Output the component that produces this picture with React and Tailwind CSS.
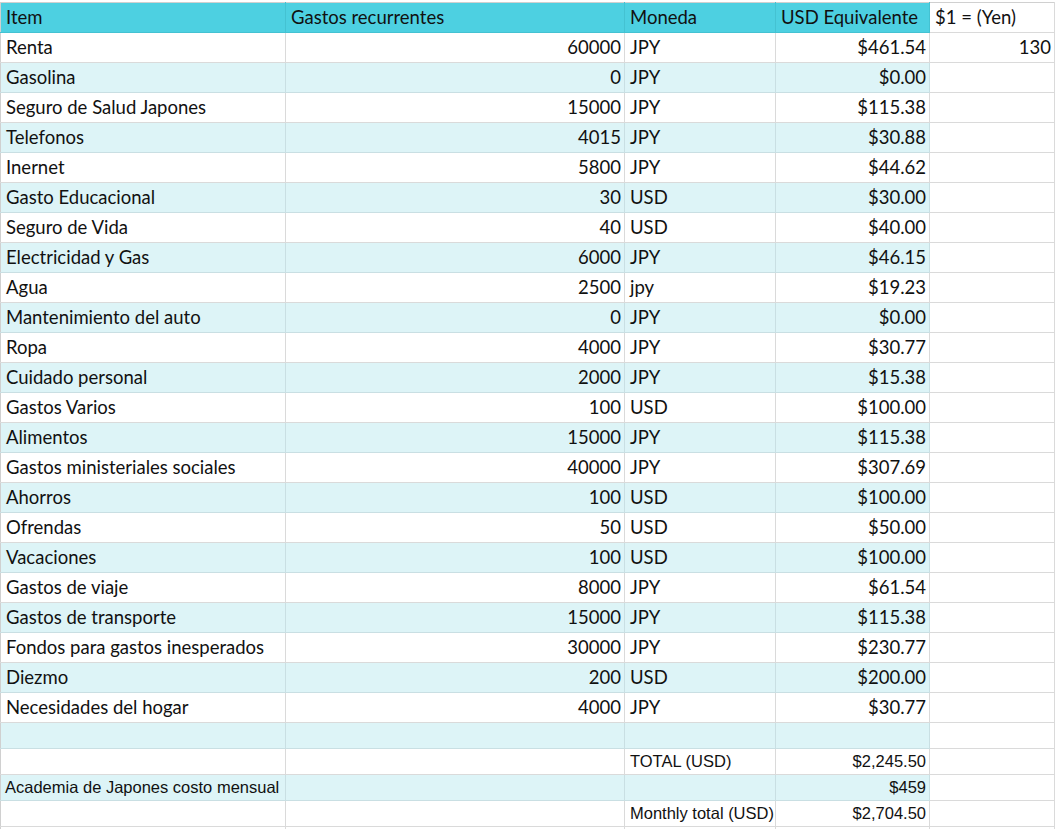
import React from 'react';

const rows = [
    ['Renta', '60000', 'JPY', '$461.54', '130'],
    ['Gasolina', '0', 'JPY', '$0.00'],
    ['Seguro de Salud Japones', '15000', 'JPY', '$115.38'],
    ['Telefonos', '4015', 'JPY', '$30.88'],
    ['Inernet', '5800', 'JPY', '$44.62'],
    ['Gasto Educacional', '30', 'USD', '$30.00'],
    ['Seguro de Vida', '40', 'USD', '$40.00'],
    ['Electricidad y Gas', '6000', 'JPY', '$46.15'],
    ['Agua', '2500', 'jpy', '$19.23'],
    ['Mantenimiento del auto', '0', 'JPY', '$0.00'],
    ['Ropa', '4000', 'JPY', '$30.77'],
    ['Cuidado personal', '2000', 'JPY', '$15.38'],
    ['Gastos Varios', '100', 'USD', '$100.00'],
    ['Alimentos', '15000', 'JPY', '$115.38'],
    ['Gastos ministeriales sociales', '40000', 'JPY', '$307.69'],
    ['Ahorros', '100', 'USD', '$100.00'],
    ['Ofrendas', '50', 'USD', '$50.00'],
    ['Vacaciones', '100', 'USD', '$100.00'],
    ['Gastos de viaje', '8000', 'JPY', '$61.54'],
    ['Gastos de transporte', '15000', 'JPY', '$115.38'],
    ['Fondos para gastos inesperados', '30000', 'JPY', '$230.77'],
    ['Diezmo', '200', 'USD', '$200.00'],
    ['Necesidades del hogar', '4000', 'JPY', '$30.77'],
];

const calibri = { fontFamily: 'Lato, "Open Sans", sans-serif' };
const arial = { fontFamily: '"Liberation Sans", Arial, sans-serif' };

const Cell = ({ children, right, band, last, className = '' }) => (
    <td
        className={`border-r border-b px-[5px] whitespace-nowrap overflow-hidden ${right ? 'text-right pr-[3px]' : 'text-left'} ${band && !last ? 'bg-[#ddf4f7] border-[#c9dfe3]' : 'bg-white border-[#dadada]'} ${className}`}
    >
        {children}
    </td>
);

export default function App() {
    return (
        <div className="w-[1056px] h-[829px] overflow-hidden bg-white pt-[2px] text-[#111]">
            <table className="table-fixed border-collapse border-l border-t border-[#d0d0d0]" style={{ width: 1054 }}>
                <colgroup>
                    <col style={{ width: 285 }} />
                    <col style={{ width: 339 }} />
                    <col style={{ width: 151 }} />
                    <col style={{ width: 154 }} />
                    <col style={{ width: 125 }} />
                </colgroup>
                <tbody className="text-[18.5px] leading-none" style={calibri}>
                    <tr className="h-[30px]">
                        <td className="bg-[#4dd0e1] border-r border-b border-[#44c2d2] px-[5px]">Item</td>
                        <td className="bg-[#4dd0e1] border-r border-b border-[#44c2d2] px-[5px]">Gastos recurrentes</td>
                        <td className="bg-[#4dd0e1] border-r border-b border-[#44c2d2] px-[5px]">Moneda</td>
                        <td className="bg-[#4dd0e1] border-r border-b border-[#44c2d2] px-[5px]">USD Equivalente</td>
                        <td className="bg-white border-r border-b border-[#dadada] px-[5px]">$1 = (Yen)</td>
                    </tr>
                    {rows.map((r, i) => {
                        const band = i % 2 === 1;
                        return (
                            <tr key={r[0]} className="h-[30px]">
                                <Cell band={band}>{r[0]}</Cell>
                                <Cell band={band} right>{r[1]}</Cell>
                                <Cell band={band}>{r[2]}</Cell>
                                <Cell band={band} right>{r[3]}</Cell>
                                <Cell band={band} last right>{r[4] || ''}</Cell>
                            </tr>
                        );
                    })}
                </tbody>
                <tbody className="text-[16.5px] leading-none" style={arial}>
                    <tr className="h-[26px]">
                        <Cell band />
                        <Cell band />
                        <Cell band />
                        <Cell band />
                        <Cell last />
                    </tr>
                    <tr className="h-[26px]">
                        <Cell />
                        <Cell />
                        <Cell>TOTAL (USD)</Cell>
                        <Cell right>$2,245.50</Cell>
                        <Cell last />
                    </tr>
                    <tr className="h-[26px]">
                        <Cell band className="pl-[4px]">Academia de Japones costo mensual</Cell>
                        <Cell band />
                        <Cell band />
                        <Cell band right>$459</Cell>
                        <Cell last />
                    </tr>
                    <tr className="h-[26px]">
                        <Cell />
                        <Cell />
                        <Cell>Monthly total (USD)</Cell>
                        <Cell right>$2,704.50</Cell>
                        <Cell last />
                    </tr>
                    <tr className="h-[26px]">
                        <Cell />
                        <Cell />
                        <Cell />
                        <Cell />
                        <Cell last />
                    </tr>
                </tbody>
            </table>
        </div>
    );
}
